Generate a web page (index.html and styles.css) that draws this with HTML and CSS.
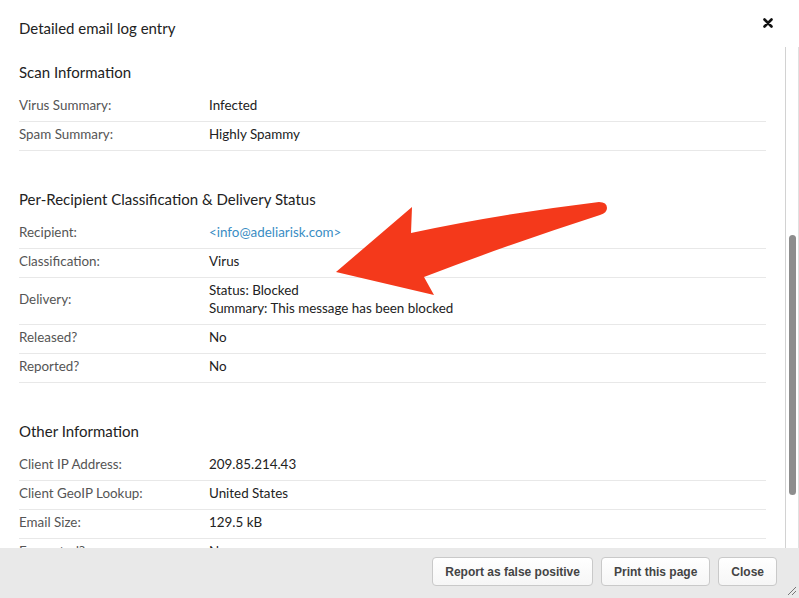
FILE: index.html
```html
<!DOCTYPE html>
<html lang="en">

<head>
    <meta charset="UTF-8">
    <meta name="viewport" content="width=device-width, initial-scale=1.0">
    <title>Detailed email log entry</title>
    <link rel="stylesheet" href="styles.css">
</head>

<body>

    <div class="dialog">
        <div class="dialog-header">
            <span class="dialog-title">Detailed email log entry</span>
            <svg class="dialog-x" width="10" height="10" viewBox="0 0 10 10">
                <path d="M1.5 1.5 L8.5 8.5 M8.5 1.5 L1.5 8.5" stroke="#111" stroke-width="2.6" stroke-linecap="round" />
            </svg>
        </div>

        <div class="dialog-body">
            <div class="log-content">
                <section class="log-section">
                    <h2 class="log-heading">Scan Information</h2>
                    <div class="log-row"><span class="log-label">Virus Summary:</span><span class="log-value">Infected</span></div>
                    <div class="log-row"><span class="log-label">Spam Summary:</span><span class="log-value">Highly Spammy</span></div>
                </section>

                <section class="log-section">
                    <h2 class="log-heading">Per-Recipient Classification &amp; Delivery Status</h2>
                    <div class="log-row"><span class="log-label">Recipient:</span><span class="log-value"><a class="log-link" href="#">&lt;info@adeliarisk.com&gt;</a></span></div>
                    <div class="log-row"><span class="log-label">Classification:</span><span class="log-value">Virus</span></div>
                    <div class="log-row log-row-tall"><span class="log-label">Delivery:</span><span class="log-value">Status: Blocked<br>Summary: This message has been blocked</span></div>
                    <div class="log-row"><span class="log-label">Released?</span><span class="log-value">No</span></div>
                    <div class="log-row"><span class="log-label">Reported?</span><span class="log-value">No</span></div>
                </section>

                <section class="log-section">
                    <h2 class="log-heading">Other Information</h2>
                    <div class="log-row"><span class="log-label">Client IP Address:</span><span class="log-value">209.85.214.43</span></div>
                    <div class="log-row"><span class="log-label">Client GeoIP Lookup:</span><span class="log-value">United States</span></div>
                    <div class="log-row"><span class="log-label">Email Size:</span><span class="log-value">129.5 kB</span></div>
                    <div class="log-row"><span class="log-label">Encrypted?</span><span class="log-value">No</span></div>
                </section>
            </div>

            <div class="scroll-track">
                <div class="scroll-thumb"></div>
            </div>
        </div>

        <div class="dialog-footer">
            <button class="btn">Report as false positive</button>
            <button class="btn">Print this page</button>
            <button class="btn">Close</button>
        </div>

        <!-- annotation arrow drawn over the dialog -->
        <svg class="annotation" width="799" height="598" viewBox="0 0 799 598">
            <path d="M336 272 L412 207 L411 233 Q500 214 599 202 Q607 202 607 208 Q607 213 600 215 Q510 244 424 277 L434 295 Z" fill="#f4391b" />
        </svg>

        <svg class="resize-grip" width="12" height="12" viewBox="0 0 12 12">
            <path d="M11 3 L3 11 M11 7 L7 11" stroke="#777" stroke-width="1" />
        </svg>
    </div>

</body>

</html>
```

FILE: styles.css
```css
body {
    margin: 0;
    font-family: Lato, 'Open Sans', sans-serif;
    background-color: #fff;
    color: #222;
    overflow: hidden;
}

.dialog {
    width: 799px;
    height: 598px;
    display: flex;
    flex-direction: column;
    position: relative;
    background-color: #fff;
}

.dialog-header {
    height: 45px;
    box-sizing: border-box;
    padding: 18px 26px 0 19px;
    display: flex;
    justify-content: space-between;
    align-items: flex-start;
}

.dialog-title {
    font-size: 15px;
    line-height: 20px;
    color: #222;
}

.dialog-body {
    flex: 1;
    display: flex;
    overflow: hidden;
}

.log-content {
    flex: 1;
    overflow: hidden;
    padding: 17px 19px 0 19px;
}

.log-section {
    margin-bottom: 38px;
}

.log-heading {
    margin: 0 0 11px;
    font-size: 15px;
    line-height: 20px;
    font-weight: normal;
    color: #222;
}

.log-row {
    display: flex;
    padding: 3px 0 7px;
    border-bottom: 1px solid #e8e8e8;
    font-size: 13.4px;
    line-height: 18px;
}

.log-row-tall .log-label {
    align-self: center;
}

.log-label {
    width: 190px;
    flex-shrink: 0;
    color: #555;
}

.log-value {
    color: #222;
}

.log-link {
    color: #3a8dc4;
    text-decoration: none;
}

.scroll-track {
    width: 14px;
    border-left: 1px solid #d2d2d2;
    border-right: 1px solid #e0e0e0;
    box-sizing: border-box;
    margin-top: 2px;
    display: flex;
    justify-content: center;
}

.scroll-thumb {
    width: 7px;
    height: 260px;
    margin-top: 188px;
    border-radius: 4px;
    background-color: #8d8d8d;
}

.dialog-footer {
    height: 50px;
    box-sizing: border-box;
    background-color: #e9e9e9;
    display: flex;
    justify-content: flex-end;
    align-items: flex-start;
    gap: 8px;
    padding: 9px 22px 0 0;
}

.btn {
    height: 29px;
    padding: 0 12px;
    font-family: 'Liberation Sans', Arial, sans-serif;
    font-size: 12px;
    font-weight: bold;
    color: #444;
    background: linear-gradient(#ffffff, #f6f6f6);
    border: 1px solid #c9c9c9;
    border-radius: 4px;
}

.annotation {
    position: absolute;
    left: 0;
    top: 0;
    pointer-events: none;
}

.resize-grip {
    position: absolute;
    right: 2px;
    bottom: 2px;
}
```
